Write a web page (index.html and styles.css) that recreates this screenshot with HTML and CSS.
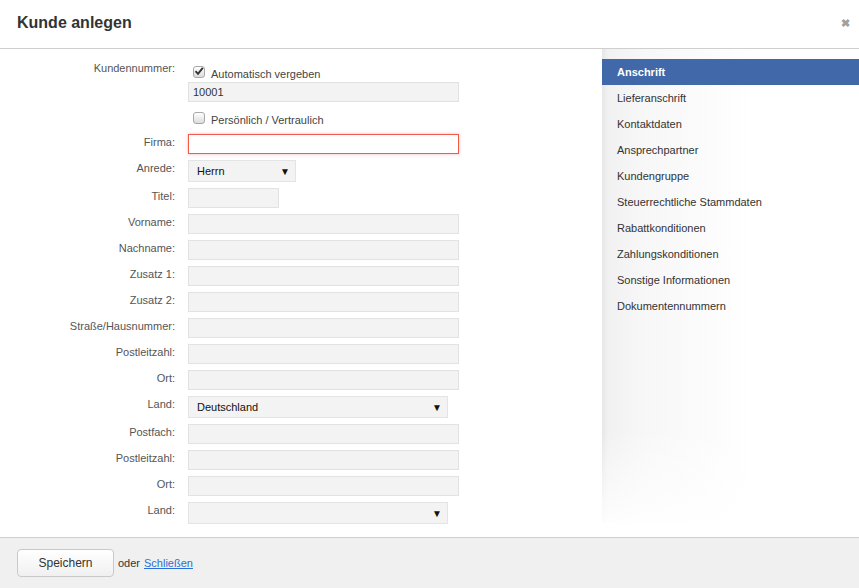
FILE: index.html
```html
<!DOCTYPE html>
<html lang="de">
<head>
<meta charset="utf-8">
<title>Kunde anlegen</title>
<link rel="stylesheet" href="styles.css">
</head>
<body>
<div class="dialog">
  <div class="header">
    <h1 class="title">Kunde anlegen</h1>
    <span class="close">&#x2716;</span>
  </div>
  <div class="main">
    <form class="form">
      <div class="row row-kn">
        <label class="lbl">Kundennummer:</label>
        <div class="field">
          <div class="check-line first">
            <span class="cb checked"><svg width="10" height="10" viewBox="0 0 10 10"><path d="M1.5 5.2 L4 7.8 L8.8 1.8" fill="none" stroke="#333" stroke-width="1.9"/></svg></span>
            <span class="cb-text">Automatisch vergeben</span>
          </div>
          <div class="input ro">10001</div>
          <div class="check-line second">
            <span class="cb"></span>
            <span class="cb-text">Persönlich / Vertraulich</span>
          </div>
        </div>
      </div>
      <div class="row"><label class="lbl">Firma:</label><div class="input error"></div></div>
      <div class="row sel-row"><label class="lbl">Anrede:</label><div class="select w-anrede"><span>Herrn</span><span class="arrow">&#9660;</span></div></div>
      <div class="row"><label class="lbl">Titel:</label><div class="input w-titel"></div></div>
      <div class="row"><label class="lbl">Vorname:</label><div class="input"></div></div>
      <div class="row"><label class="lbl">Nachname:</label><div class="input"></div></div>
      <div class="row"><label class="lbl">Zusatz 1:</label><div class="input"></div></div>
      <div class="row"><label class="lbl">Zusatz 2:</label><div class="input"></div></div>
      <div class="row"><label class="lbl">Straße/Hausnummer:</label><div class="input"></div></div>
      <div class="row"><label class="lbl">Postleitzahl:</label><div class="input"></div></div>
      <div class="row"><label class="lbl">Ort:</label><div class="input"></div></div>
      <div class="row sel-row"><label class="lbl">Land:</label><div class="select w-land"><span>Deutschland</span><span class="arrow">&#9660;</span></div></div>
      <div class="row"><label class="lbl">Postfach:</label><div class="input"></div></div>
      <div class="row"><label class="lbl">Postleitzahl:</label><div class="input"></div></div>
      <div class="row"><label class="lbl">Ort:</label><div class="input"></div></div>
      <div class="row sel-row"><label class="lbl">Land:</label><div class="select w-land"><span></span><span class="arrow">&#9660;</span></div></div>
    </form>
    <nav class="side">
      <ul class="nav">
        <li class="active">Anschrift</li>
        <li>Lieferanschrift</li>
        <li>Kontaktdaten</li>
        <li>Ansprechpartner</li>
        <li>Kundengruppe</li>
        <li>Steuerrechtliche Stammdaten</li>
        <li>Rabattkonditionen</li>
        <li>Zahlungskonditionen</li>
        <li>Sonstige Informationen</li>
        <li>Dokumentennummern</li>
      </ul>
    </nav>
  </div>
  <div class="footer">
    <button class="btn" type="button">Speichern</button>
    <span class="oder">oder</span>
    <a class="link" href="#">Schließen</a>
  </div>
</div>
</body>
</html>
```

FILE: styles.css
```css
* { box-sizing: border-box; }
html, body { margin: 0; padding: 0; }
body {
  width: 859px;
  height: 588px;
  overflow: hidden;
  background: #fff;
  font-family: "Liberation Sans", Arial, sans-serif;
  font-size: 11px;
  color: #333;
}
.dialog { display: flex; flex-direction: column; height: 588px; }

.header {
  height: 49px;
  border-bottom: 1px solid #cfcfcf;
  display: flex;
  align-items: center;
  justify-content: space-between;
  padding: 0 9px 0 17px;
  flex: none;
}
.title {
  margin: 0;
  font-size: 16px;
  font-weight: bold;
  color: #333;
  padding-bottom: 2px;
}
.close {
  color: #a0a0a0;
  font-size: 11px;
  font-weight: bold;
  padding-bottom: 2px;
}

.main {
  display: flex;
  height: 488px;
  flex: none;
}
.form {
  width: 602px;
  padding-top: 13px;
  display: flex;
  flex-direction: column;
}
.row {
  display: flex;
  align-items: flex-start;
  margin-bottom: 6px;
}
.lbl {
  width: 175px;
  text-align: right;
  color: #555;
  padding-top: 2px;
  line-height: 13px;
  margin-right: 13px;
  flex: none;
}
.row-kn .lbl { padding-top: 1px; }
.row-kn { margin-top: -1px; }
.field { display: flex; flex-direction: column; }

.check-line {
  display: flex;
  align-items: center;
  padding-left: 5px;
}
.check-line.first { height: 21px; padding-top: 0; }
.check-line.second { height: 20px; margin-top: 6px; padding-top: 0; }
.cb {
  width: 12px;
  height: 12px;
  border: 1px solid #a8a8a8;
  border-radius: 3px;
  background: linear-gradient(#ffffff, #dcdcdc);
  display: inline-flex;
  align-items: center;
  justify-content: center;
  margin-right: 6px;
  flex: none;
}
.cb svg { display: block; margin-top: -1px; }
.cb-text { color: #444; position: relative; top: 2px; }

.input {
  width: 271px;
  height: 20px;
  background: #f3f3f3;
  border: 1px solid #e2e2e2;
  padding: 0 4px;
  line-height: 18px;
  color: #333;
}
.input.error {
  background: #fff;
  border: 1px solid #f25a4c;
  box-shadow: 0 0 3px rgba(242, 90, 76, 0.45);
}
.w-titel { width: 91px; }

.select {
  height: 22px;
  background: #f3f3f3;
  border: 1px solid #e4e4e4;
  display: flex;
  align-items: center;
  justify-content: space-between;
  padding: 0 5px 0 8px;
  color: #111;
  font-size: 11px;
}
.w-anrede { width: 108px; }
.w-land { width: 260px; }
.arrow { font-size: 10px; color: #111; }

.side {
  width: 257px;
  height: 474px;
  flex: none;
  background:
    linear-gradient(to bottom, rgba(255,255,255,0) 0, rgba(255,255,255,0) 80%, rgba(255,255,255,0.9) 100%),
    linear-gradient(to right, #e6e6e6 0, #f1f1f1 6px, #f7f7f7 40px, #fcfcfc 110px, #ffffff 150px);
  padding-top: 10px;
}
.nav { list-style: none; margin: 0; padding: 0; }
.nav li {
  height: 26px;
  line-height: 26px;
  padding-left: 15px;
  color: #333;
  font-size: 11px;
}
.nav li.active {
  background: #4168a8;
  color: #fff;
  font-weight: bold;
}

.footer {
  flex: 1;
  border-top: 1px solid #cfcfcf;
  background: #f0f0f0;
  display: flex;
  align-items: center;
  padding: 0 0 0 17px;
}
.btn {
  width: 97px;
  height: 28px;
  border: 1px solid #c9c9c9;
  border-radius: 4px;
  background: linear-gradient(#ffffff, #f0f0f0);
  font-family: "Liberation Sans", Arial, sans-serif;
  font-size: 12px;
  color: #333;
  margin-right: 4px;
  padding: 0;
}
.oder { color: #333; margin-right: 4px; }
.link { color: #2a6fd6; text-decoration: underline; }
```
